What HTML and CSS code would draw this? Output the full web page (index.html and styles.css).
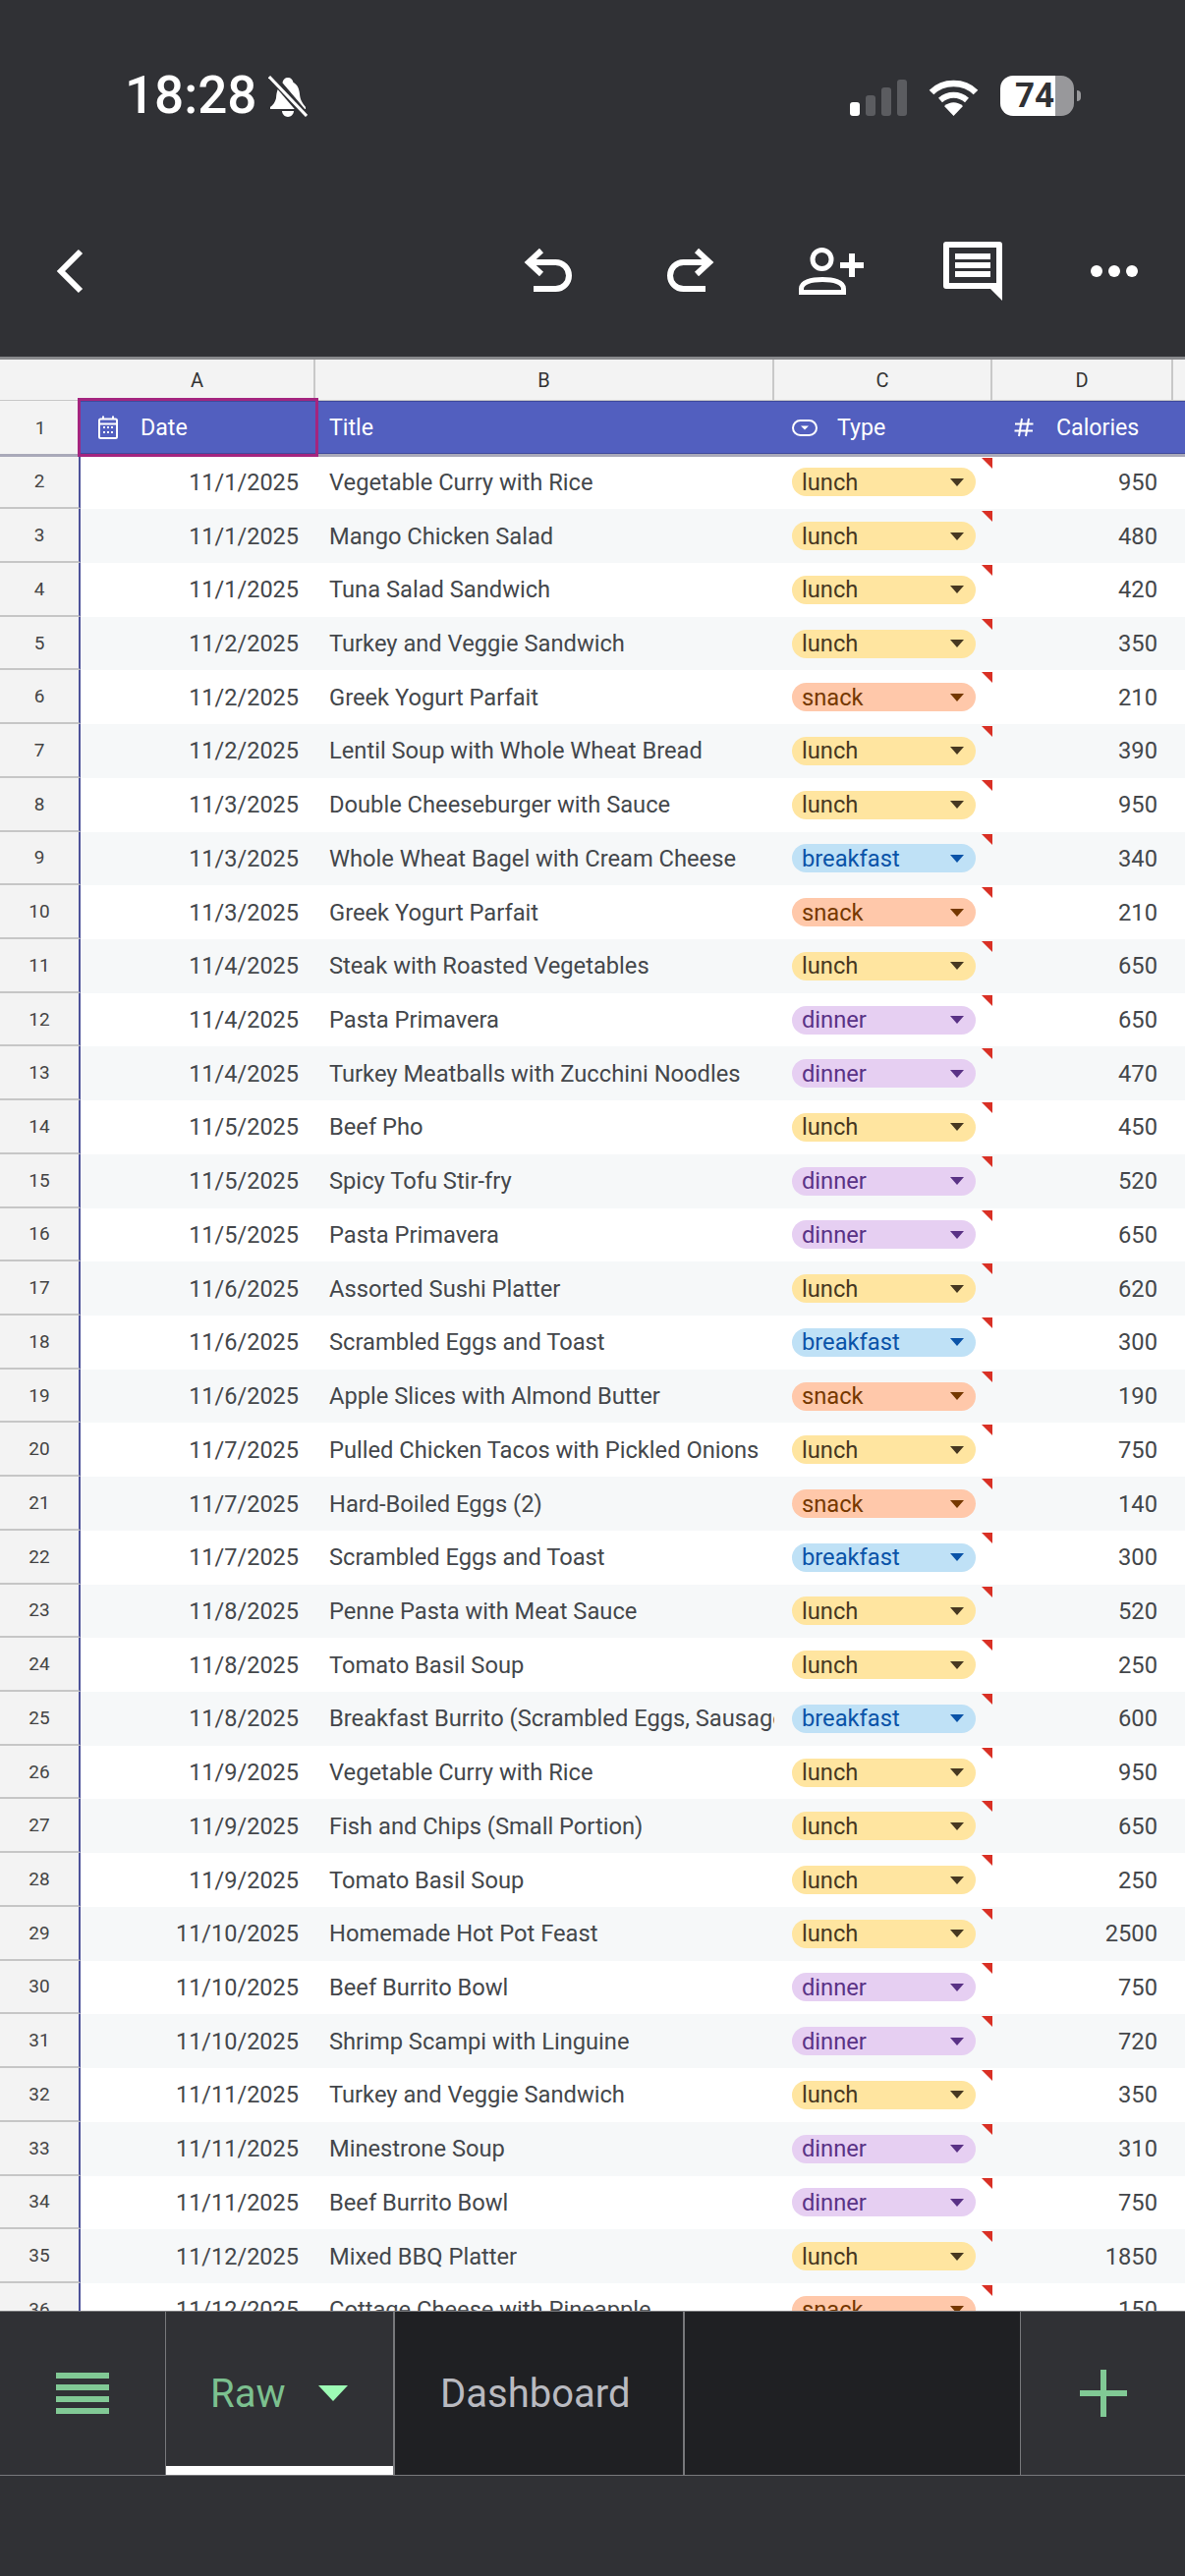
FILE: index.html
```html
<!DOCTYPE html>
<html lang="en">
<head>
  <meta charset="UTF-8" />
  <meta name="viewport" content="width=device-width, initial-scale=1" />
  <title>Raw</title>
  <link rel="stylesheet" href="styles.css">
</head>
<body>
<div class="screen">
  <header class="top">
    <div class="status">
      <span class="time">18:28</span>
      <svg class="bell" width="40" height="42" viewBox="0 0 40 42">
        <path d="M20 2c3 0 5 2 5.500 5 4 2 6 6 6.500 12 .5 6 3 9 6 13v2H2v-2c3-2 5-5 6-9 .5-7 2-12 6.500-16C15 4 17 2 20 2z" fill="#fff"/>
        <path d="M14 36h12c0 3-3 6-6 6s-6-3-6-6z" fill="#fff"/>
        <path d="M3 0l35 41" stroke="#303135" stroke-width="8"/>
        <path d="M1 1l38 40" stroke="#fff" stroke-width="3"/>
      </svg>
      <div class="status-right">
        <svg class="signal" width="58" height="37" viewBox="0 0 58 37">
          <rect x="0" y="23" width="10" height="14" rx="3" fill="#fff"/>
          <rect x="16" y="16" width="10" height="21" rx="3" fill="#5b5c60"/>
          <rect x="32" y="8" width="10" height="29" rx="3" fill="#5b5c60"/>
          <rect x="48" y="0" width="10" height="37" rx="3" fill="#5b5c60"/>
        </svg>
        <svg class="wifi" width="51" height="37" viewBox="0 0 51 37">
          <path d="M3 13C15 1 36 1 48 13" fill="none" stroke="#fff" stroke-width="6.500"/>
          <path d="M12 21C20 14 31 14 39 21" fill="none" stroke="#fff" stroke-width="6"/>
          <path d="M16 27c6-5 13-5 19 0L25.500 37z" fill="#fff"/>
        </svg>
        <div class="battery"><span class="battery-level">74</span></div>
        <i class="battery-nub"></i>
      </div>
    </div>
    <nav class="toolbar">
      <svg class="tool" viewBox="0 0 64 64"><path d="M43 12L23 32l20 20" fill="none" stroke="#fff" stroke-width="6"/></svg>
      <svg class="tool tool-first" viewBox="0 0 64 64"><path d="M25 11L12 23l13 12M13 23h26.500a13.500 13.500 0 0 1 0 27H17" fill="none" stroke="#fff" stroke-width="6"/></svg>
      <svg class="tool" viewBox="0 0 64 64"><path d="M39 11l13 12-13 12M52 23H25.500a13.500 13.500 0 0 0 0 27H48" fill="none" stroke="#fff" stroke-width="6"/></svg>
      <svg class="tool" viewBox="0 0 64 64">
        <circle cx="22.500" cy="20" r="9.500" fill="none" stroke="#fff" stroke-width="5"/>
        <path d="M1.500 53.500V50c0-7 10.500-9.500 21.500-9.500S44.500 43 44.500 50v3.500z" fill="none" stroke="#fff" stroke-width="5"/>
        <path d="M41 26h24M53 14v24" fill="none" stroke="#fff" stroke-width="6"/>
      </svg>
      <svg class="tool" viewBox="0 0 64 64">
        <path fill-rule="evenodd" d="M5 2h54a3 3 0 0 1 3 3v57L50 50H5a3 3 0 0 1-3-3V5a3 3 0 0 1 3-3zM8 8v36h48V8z" fill="#fff"/>
        <path d="M14 14h36v6H14zM14 23h36v6H14zM14 32h36v6H14z" fill="#fff"/>
      </svg>
      <svg class="tool" viewBox="0 0 64 64"><circle cx="14" cy="32" r="6" fill="#fff"/><circle cx="32" cy="32" r="6" fill="#fff"/><circle cx="50" cy="32" r="6" fill="#fff"/></svg>
    </nav>
  </header>

  <main class="sheet">
    <div class="row col-heads">
      <div class="corner"></div><div>A</div><div>B</div><div>C</div><div>D</div><div></div>
    </div>
    <div class="row head-row">
      <div class="num">1</div>
      <div class="head-cell selected">
        <svg width="20" height="24" viewBox="0 0 20 24">
          <path d="M2.500 3.500h15a1.500 1.500 0 0 1 1.500 1.500v16.500a1.500 1.500 0 0 1-1.500 1.500h-15A1.500 1.500 0 0 1 1 21.500V5a1.500 1.500 0 0 1 1.500-1.500zM1 8.500h18M5 0.500v4M15 0.500v4" fill="none" stroke="#fff" stroke-width="2"/>
          <path d="M5 11h2v2H5zM9 11h2v2H9zM13 11h2v2h-2zM5 16h2v2H5zM9 16h2v2H9zM13 16h2v2h-2z" fill="#fff"/>
        </svg>
        <span>Date</span>
      </div>
      <div class="head-cell head-title"><span>Title</span></div>
      <div class="head-cell head-type">
        <svg width="26" height="17" viewBox="0 0 26 17">
          <rect x="1" y="1" width="24" height="15" rx="7.500" fill="none" stroke="#fff" stroke-width="2"/>
          <path d="M9 6.500h8l-4 4z" fill="#fff"/>
        </svg>
        <span>Type</span>
      </div>
      <div class="head-cell head-cal">
        <svg width="20" height="20" viewBox="0 0 20 20">
          <path d="M8 1L5 19M15 1l-3 18M1 6.500h18.500M0.500 13.500H19" fill="none" stroke="#fff" stroke-width="2"/>
        </svg>
        <span>Calories</span>
      </div>
      <div class="head-cell"></div>
    </div>

    <div class="row"><div class="num">2</div><div class="date">11/1/2025</div><div class="title">Vegetable Curry with Rice</div><div class="type"><span class="chip lunch">lunch<i class="caret"></i></span></div><div class="cal">950</div><div></div></div>
    <div class="row"><div class="num">3</div><div class="date">11/1/2025</div><div class="title">Mango Chicken Salad</div><div class="type"><span class="chip lunch">lunch<i class="caret"></i></span></div><div class="cal">480</div><div></div></div>
    <div class="row"><div class="num">4</div><div class="date">11/1/2025</div><div class="title">Tuna Salad Sandwich</div><div class="type"><span class="chip lunch">lunch<i class="caret"></i></span></div><div class="cal">420</div><div></div></div>
    <div class="row"><div class="num">5</div><div class="date">11/2/2025</div><div class="title">Turkey and Veggie Sandwich</div><div class="type"><span class="chip lunch">lunch<i class="caret"></i></span></div><div class="cal">350</div><div></div></div>
    <div class="row"><div class="num">6</div><div class="date">11/2/2025</div><div class="title">Greek Yogurt Parfait</div><div class="type"><span class="chip snack">snack<i class="caret"></i></span></div><div class="cal">210</div><div></div></div>
    <div class="row"><div class="num">7</div><div class="date">11/2/2025</div><div class="title">Lentil Soup with Whole Wheat Bread</div><div class="type"><span class="chip lunch">lunch<i class="caret"></i></span></div><div class="cal">390</div><div></div></div>
    <div class="row"><div class="num">8</div><div class="date">11/3/2025</div><div class="title">Double Cheeseburger with Sauce</div><div class="type"><span class="chip lunch">lunch<i class="caret"></i></span></div><div class="cal">950</div><div></div></div>
    <div class="row"><div class="num">9</div><div class="date">11/3/2025</div><div class="title">Whole Wheat Bagel with Cream Cheese</div><div class="type"><span class="chip breakfast">breakfast<i class="caret"></i></span></div><div class="cal">340</div><div></div></div>
    <div class="row"><div class="num">10</div><div class="date">11/3/2025</div><div class="title">Greek Yogurt Parfait</div><div class="type"><span class="chip snack">snack<i class="caret"></i></span></div><div class="cal">210</div><div></div></div>
    <div class="row"><div class="num">11</div><div class="date">11/4/2025</div><div class="title">Steak with Roasted Vegetables</div><div class="type"><span class="chip lunch">lunch<i class="caret"></i></span></div><div class="cal">650</div><div></div></div>
    <div class="row"><div class="num">12</div><div class="date">11/4/2025</div><div class="title">Pasta Primavera</div><div class="type"><span class="chip dinner">dinner<i class="caret"></i></span></div><div class="cal">650</div><div></div></div>
    <div class="row"><div class="num">13</div><div class="date">11/4/2025</div><div class="title">Turkey Meatballs with Zucchini Noodles</div><div class="type"><span class="chip dinner">dinner<i class="caret"></i></span></div><div class="cal">470</div><div></div></div>
    <div class="row"><div class="num">14</div><div class="date">11/5/2025</div><div class="title">Beef Pho</div><div class="type"><span class="chip lunch">lunch<i class="caret"></i></span></div><div class="cal">450</div><div></div></div>
    <div class="row"><div class="num">15</div><div class="date">11/5/2025</div><div class="title">Spicy Tofu Stir-fry</div><div class="type"><span class="chip dinner">dinner<i class="caret"></i></span></div><div class="cal">520</div><div></div></div>
    <div class="row"><div class="num">16</div><div class="date">11/5/2025</div><div class="title">Pasta Primavera</div><div class="type"><span class="chip dinner">dinner<i class="caret"></i></span></div><div class="cal">650</div><div></div></div>
    <div class="row"><div class="num">17</div><div class="date">11/6/2025</div><div class="title">Assorted Sushi Platter</div><div class="type"><span class="chip lunch">lunch<i class="caret"></i></span></div><div class="cal">620</div><div></div></div>
    <div class="row"><div class="num">18</div><div class="date">11/6/2025</div><div class="title">Scrambled Eggs and Toast</div><div class="type"><span class="chip breakfast">breakfast<i class="caret"></i></span></div><div class="cal">300</div><div></div></div>
    <div class="row"><div class="num">19</div><div class="date">11/6/2025</div><div class="title">Apple Slices with Almond Butter</div><div class="type"><span class="chip snack">snack<i class="caret"></i></span></div><div class="cal">190</div><div></div></div>
    <div class="row"><div class="num">20</div><div class="date">11/7/2025</div><div class="title">Pulled Chicken Tacos with Pickled Onions</div><div class="type"><span class="chip lunch">lunch<i class="caret"></i></span></div><div class="cal">750</div><div></div></div>
    <div class="row"><div class="num">21</div><div class="date">11/7/2025</div><div class="title">Hard-Boiled Eggs (2)</div><div class="type"><span class="chip snack">snack<i class="caret"></i></span></div><div class="cal">140</div><div></div></div>
    <div class="row"><div class="num">22</div><div class="date">11/7/2025</div><div class="title">Scrambled Eggs and Toast</div><div class="type"><span class="chip breakfast">breakfast<i class="caret"></i></span></div><div class="cal">300</div><div></div></div>
    <div class="row"><div class="num">23</div><div class="date">11/8/2025</div><div class="title">Penne Pasta with Meat Sauce</div><div class="type"><span class="chip lunch">lunch<i class="caret"></i></span></div><div class="cal">520</div><div></div></div>
    <div class="row"><div class="num">24</div><div class="date">11/8/2025</div><div class="title">Tomato Basil Soup</div><div class="type"><span class="chip lunch">lunch<i class="caret"></i></span></div><div class="cal">250</div><div></div></div>
    <div class="row"><div class="num">25</div><div class="date">11/8/2025</div><div class="title">Breakfast Burrito (Scrambled Eggs, Sausage, Cheese)</div><div class="type"><span class="chip breakfast">breakfast<i class="caret"></i></span></div><div class="cal">600</div><div></div></div>
    <div class="row"><div class="num">26</div><div class="date">11/9/2025</div><div class="title">Vegetable Curry with Rice</div><div class="type"><span class="chip lunch">lunch<i class="caret"></i></span></div><div class="cal">950</div><div></div></div>
    <div class="row"><div class="num">27</div><div class="date">11/9/2025</div><div class="title">Fish and Chips (Small Portion)</div><div class="type"><span class="chip lunch">lunch<i class="caret"></i></span></div><div class="cal">650</div><div></div></div>
    <div class="row"><div class="num">28</div><div class="date">11/9/2025</div><div class="title">Tomato Basil Soup</div><div class="type"><span class="chip lunch">lunch<i class="caret"></i></span></div><div class="cal">250</div><div></div></div>
    <div class="row"><div class="num">29</div><div class="date">11/10/2025</div><div class="title">Homemade Hot Pot Feast</div><div class="type"><span class="chip lunch">lunch<i class="caret"></i></span></div><div class="cal">2500</div><div></div></div>
    <div class="row"><div class="num">30</div><div class="date">11/10/2025</div><div class="title">Beef Burrito Bowl</div><div class="type"><span class="chip dinner">dinner<i class="caret"></i></span></div><div class="cal">750</div><div></div></div>
    <div class="row"><div class="num">31</div><div class="date">11/10/2025</div><div class="title">Shrimp Scampi with Linguine</div><div class="type"><span class="chip dinner">dinner<i class="caret"></i></span></div><div class="cal">720</div><div></div></div>
    <div class="row"><div class="num">32</div><div class="date">11/11/2025</div><div class="title">Turkey and Veggie Sandwich</div><div class="type"><span class="chip lunch">lunch<i class="caret"></i></span></div><div class="cal">350</div><div></div></div>
    <div class="row"><div class="num">33</div><div class="date">11/11/2025</div><div class="title">Minestrone Soup</div><div class="type"><span class="chip dinner">dinner<i class="caret"></i></span></div><div class="cal">310</div><div></div></div>
    <div class="row"><div class="num">34</div><div class="date">11/11/2025</div><div class="title">Beef Burrito Bowl</div><div class="type"><span class="chip dinner">dinner<i class="caret"></i></span></div><div class="cal">750</div><div></div></div>
    <div class="row"><div class="num">35</div><div class="date">11/12/2025</div><div class="title">Mixed BBQ Platter</div><div class="type"><span class="chip lunch">lunch<i class="caret"></i></span></div><div class="cal">1850</div><div></div></div>
    <div class="row"><div class="num">36</div><div class="date">11/12/2025</div><div class="title">Cottage Cheese with Pineapple</div><div class="type"><span class="chip snack">snack<i class="caret"></i></span></div><div class="cal">150</div><div></div></div>
  </main>

  <footer class="tabs">
    <div class="tab tab-menu">
      <svg width="54" height="42" viewBox="0 0 54 42"><path d="M0 0h54v6H0zM0 12h54v6H0zM0 24h54v6H0zM0 36h54v6H0z" fill="#81c995"/></svg>
    </div>
    <div class="tab tab-active"><span>Raw</span><i class="tab-caret"></i></div>
    <div class="tab tab-other">Dashboard</div>
    <div class="tab tab-empty"></div>
    <div class="tab tab-add">
      <svg width="48" height="48" viewBox="0 0 48 48"><path d="M0 21h48v6H0zM21 0h6v48h-6z" fill="#81c995"/></svg>
    </div>
  </footer>
  <div class="bottom"></div>
</div>
</body>
</html>
```

FILE: styles.css
```css
body {
  margin: 0;
  background: #303135;
  font-family: Roboto, "Liberation Sans", sans-serif;
}
.screen {
  width: 1206px;
  height: 2622px;
  display: flex;
  flex-direction: column;
  overflow: hidden;
}

/* status bar + toolbar */
.top {
  height: 363px;
  flex: none;
  background: #303135;
  box-sizing: border-box;
  padding-top: 77px;
}
.status {
  height: 41px;
  display: flex;
  align-items: center;
  padding-left: 127px;
  color: #fff;
}
.time {
  font-size: 53px;
  line-height: 41px;
  font-weight: 500;
}
.bell {
  margin-left: 12px;
}
.status-right {
  margin-left: auto;
  margin-right: 106px;
  display: flex;
  align-items: center;
}
.signal {
  margin-top: 4px;
}
.wifi {
  margin-left: 22px;
  margin-top: 4px;
}
.battery {
  width: 75px;
  height: 41px;
  margin-left: 22px;
  border-radius: 13px;
  background: linear-gradient(to right, #fff 56px, #98989b 56px);
  display: flex;
  align-items: center;
}
.battery-level {
  margin-left: 15px;
  color: #303135;
  font-size: 35px;
  font-weight: 700;
  line-height: 41px;
}
.battery-nub {
  width: 4px;
  height: 11px;
  margin-left: 3px;
  border-radius: 0 4px 4px 0;
  background: #98989b;
}
.toolbar {
  display: flex;
  align-items: center;
  gap: 80px;
  margin-top: 126px;
  padding: 0 40px 0 39px;
}
.tool {
  width: 64px;
  height: 64px;
  flex: none;
  overflow: visible;
}
.tool-first {
  margin-left: auto;
}

/* grid */
.sheet {
  flex: 1;
  min-height: 0;
  overflow: hidden;
  background: #fff;
  border-top: 3px solid #88898c;
  color: #44474b;
  font-size: 23.7px;
}
.row {
  display: grid;
  grid-template-columns: 82px 239px 467px 222px 184px 12px;
  height: 54.73px;
}
.row:nth-child(even) {
  background: #f6f8f9;
}
.row > div {
  display: flex;
  align-items: center;
  white-space: nowrap;
  overflow: hidden;
  box-sizing: border-box;
}
.row.col-heads {
  height: 42px;
  background: #f3f3f3;
  font-size: 20px;
  color: #333;
}
.col-heads > div {
  justify-content: center;
  border-right: 2px solid #c8c8c8;
  border-bottom: 1px solid #c8c8c8;
}
.col-heads > div:last-child {
  border-right: none;
}
.col-heads > .corner {
  border-right: none;
}
.row.head-row {
  height: 57px;
  margin-bottom: -1.5px;
  position: relative;
  z-index: 1;
  background: #525fbf;
  color: #fff;
  border-bottom: 4px solid #a9a9b9;
  box-sizing: border-box;
}
.row > .head-cell {
  overflow: visible;
  gap: 23px;
  border-top: 1px solid #3f4a9c;
  border-bottom: 1px solid #3f4a9c;
  font-size: 23.2px;
}
.head-cell svg {
  flex: none;
}
.row > .selected {
  padding-left: 18px;
  outline: 3px solid #a4257f;
  outline-offset: 0;
  z-index: 1;
}
.head-title {
  padding-left: 14px;
}
.head-type {
  padding-left: 18px;
}
.row > .head-type {
  gap: 20px;
}
.head-cal {
  padding-left: 22px;
}
.row > .num {
  justify-content: center;
  overflow: hidden;
  background: #f3f3f3;
  color: #444;
  font-size: 19px;
  border-right: 2px solid #4d5299;
  border-bottom: 2px solid #c6c6c6;
}
.head-row > .num {
  height: 54px;
  border-right: none;
  border-bottom: none;
}
.row > .date {
  justify-content: flex-end;
  padding-right: 17px;
  font-size: 23.5px;
}
.row > .title {
  padding-left: 14px;
}
.row > .type {
  position: relative;
  padding-left: 18px;
}
.type::after {
  content: "";
  position: absolute;
  top: 2px;
  right: 0;
  width: 0;
  height: 0;
  border-top: 11px solid #d93025;
  border-left: 11px solid transparent;
}
.row > .cal {
  justify-content: flex-end;
  padding-right: 16px;
}
.chip {
  width: 187px;
  height: 29px;
  box-sizing: border-box;
  padding: 0 12px 0 10px;
  border-radius: 15px;
  display: flex;
  align-items: center;
  justify-content: space-between;
}
.caret {
  width: 0;
  height: 0;
  border-left: 7.500px solid transparent;
  border-right: 7.500px solid transparent;
  border-top: 8px solid currentColor;
}
.lunch {
  background: #ffe5a0;
  color: #473821;
}
.snack {
  background: #ffc8aa;
  color: #753800;
}
.breakfast {
  background: #bfe1f6;
  color: #0a53a8;
}
.dinner {
  background: #e6cff2;
  color: #5a3286;
}

/* sheet tabs */
.tabs {
  height: 168px;
  flex: none;
  box-sizing: border-box;
  display: flex;
  background: #303135;
  border-top: 1px solid #77787b;
  border-bottom: 1px solid #77787b;
  font-size: 40px;
}
.tab {
  display: flex;
  align-items: center;
  box-sizing: border-box;
}
.tab-menu {
  width: 168px;
  padding-left: 57px;
}
.tab-active {
  width: 232px;
  padding-left: 45px;
  border-left: 1px solid #77787b;
  color: #7cc08f;
  box-shadow: inset 0 -9px 0 #fff;
}
.tab-caret {
  margin-left: 34px;
  width: 0;
  height: 0;
  border-left: 15px solid transparent;
  border-right: 15px solid transparent;
  border-top: 16px solid #9dfbb5;
}
.tab-other {
  width: 295px;
  padding-left: 46px;
  background: #1f2023;
  border-left: 2px solid #77787b;
  color: #b9bac0;
}
.tab-empty {
  width: 343px;
  background: #1f2023;
  border-left: 2px solid #77787b;
}
.tab-add {
  flex: 1;
  padding-left: 60px;
  border-left: 1px solid #77787b;
}
.bottom {
  height: 102px;
  flex: none;
  background: #303135;
}
```
